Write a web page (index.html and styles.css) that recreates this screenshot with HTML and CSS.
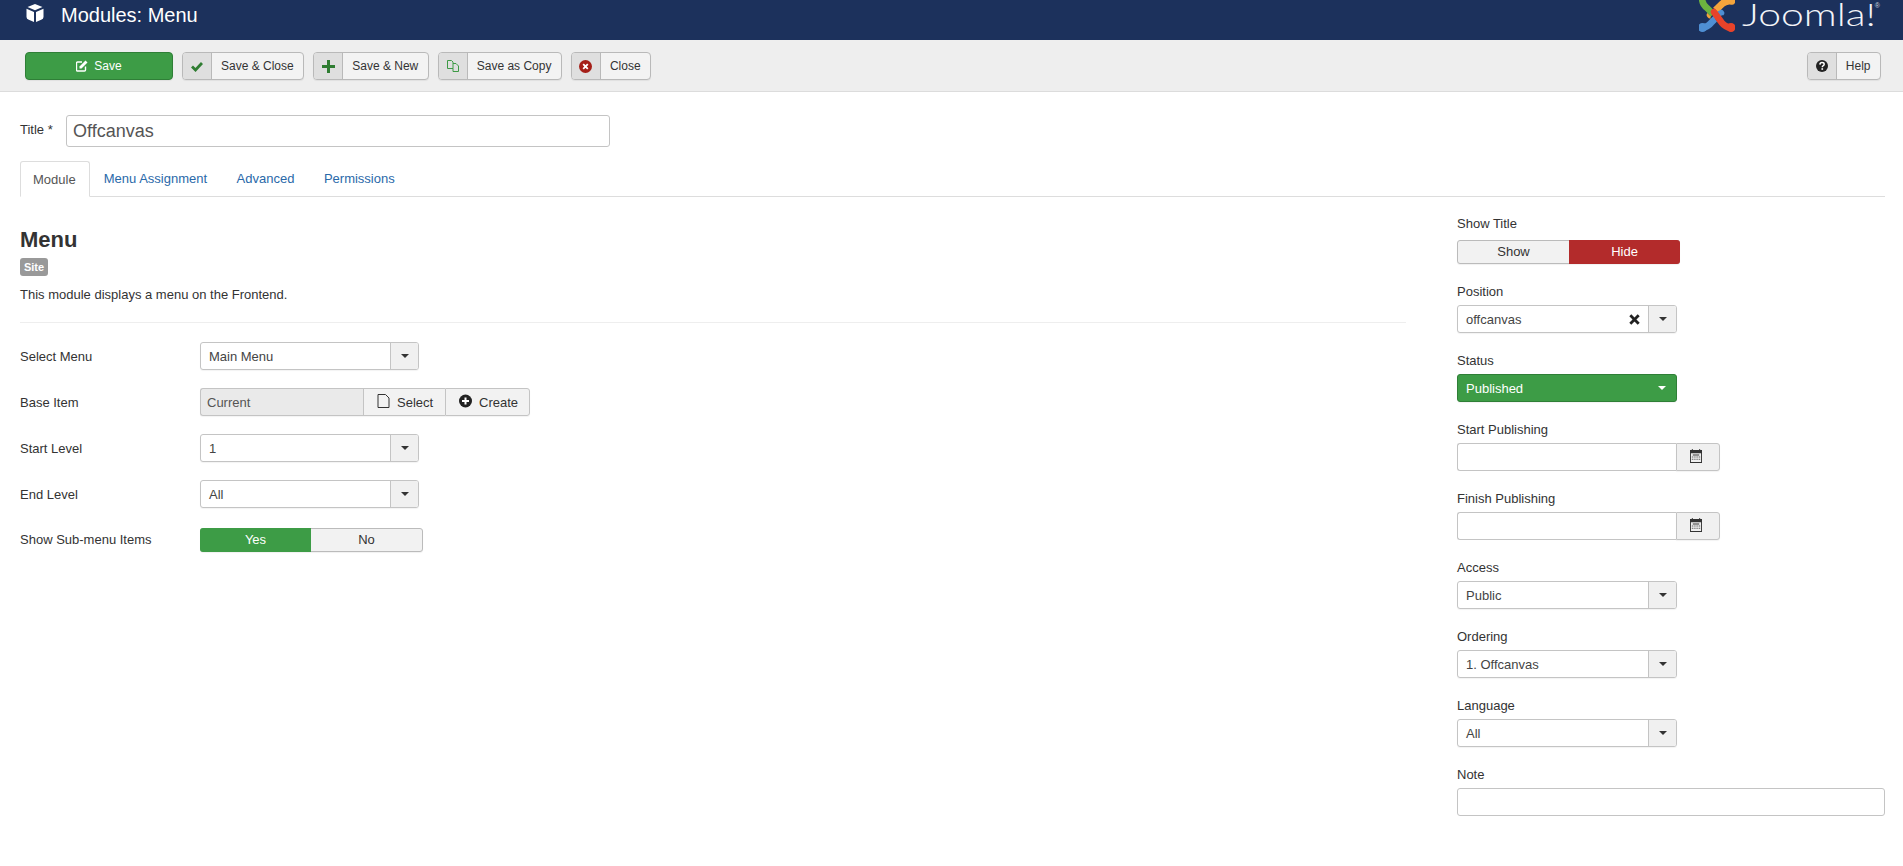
FILE: index.html
```html
<!DOCTYPE html>
<html lang="en">
<head>
<meta charset="utf-8">
<title>Modules: Menu</title>
<link rel="stylesheet" href="styles.css">
</head>
<body>
<header class="topbar">
  <svg class="cube" viewBox="0 0 18 18"><path d="M9 0 L16.5 3 L9 6.2 L1.500 3z"/><path d="M0.500 4.800 L8 8 V18 L2.800 15.800 Q0.500 15 0.500 13z"/><path d="M17.500 4.800 L10 8 V18 L15.200 15.800 Q17.500 15 17.500 13z"/></svg>
  <h1 class="page-title">Modules: Menu</h1>
  <div class="logo">
    <svg class="logo-mark" viewBox="0 0 36 33">
      <g fill="none" stroke-linecap="round" stroke-width="6.500">
        <path stroke="#f4a43c" d="M33 1.500 Q26 0 22 5 L11 15"/>
        <path stroke="#1c315c" stroke-width="8" stroke-linecap="butt" d="M9 8 L14 13"/>
        <path stroke="#6db33f" d="M3 -2 Q3 4 8 8 L19 19"/>
        <path stroke="#1c315c" stroke-width="8" stroke-linecap="butt" d="M14 20 L19 15"/>
        <path stroke="#4f8fd3" d="M3 28 Q9 27 12 23 L22 13"/>
        <path stroke="#1c315c" stroke-width="8" stroke-linecap="butt" d="M24 24 L20 17"/>
        <path stroke="#e8432a" d="M32 28 Q26 27 23 23 L15 12"/>
        <path stroke="#f4a43c" d="M27 2 Q24 2.500 22 5 L19.500 7.300"/>
      </g>
      <circle cx="3.500" cy="27.500" r="4.500" fill="#4f8fd3"/>
      <circle cx="32" cy="27.500" r="4.500" fill="#e8432a"/>
    </svg>
    <span class="logo-text">Joomla!</span><span class="logo-reg">®</span>
  </div>
</header>

<nav class="toolbar">
  <button class="btn btn-save"><svg class="ico-save" viewBox="0 0 12 12"><path d="M9.500 6.500 V10 a1 1 0 0 1 -1 1 H1.500 a1 1 0 0 1 -1 -1 V3 a1 1 0 0 1 1 -1 H6" fill="none" stroke="#fff" stroke-width="1.400"/><path d="M3.500 6.500 L9.500 0.500 L11.500 2.500 L5.500 8.500 H3.500z" fill="#fff"/></svg>Save</button>
  <button class="btn"><span class="btn-ico"><svg class="ico" viewBox="0 0 12 12"><path d="M1 6.500 L4.500 10 L11 3" fill="none" stroke="#2f7d32" stroke-width="2.800"/></svg></span><span class="btn-label">Save &amp; Close</span></button>
  <button class="btn"><span class="btn-ico"><svg class="ico ico-lg" viewBox="0 0 13 13"><path d="M5 0 H8 V5 H13 V8 H8 V13 H5 V8 H0 V5 H5z" fill="#2f7d32"/></svg></span><span class="btn-label">Save &amp; New</span></button>
  <button class="btn"><span class="btn-ico"><svg class="ico" viewBox="0 0 12 12"><path d="M0.500 0.500 H4.500 L6 2 V8.500 H0.500z M6 3.500 H9 L11.500 6 V11.500 H6 V8.500" fill="none" stroke="#3d9a45"/></svg></span><span class="btn-label">Save as Copy</span></button>
  <button class="btn"><span class="btn-ico"><svg class="ico ico-lg" viewBox="0 0 13 13"><circle cx="6.500" cy="6.500" r="6.500" fill="#a51f18"/><path d="M4.200 4.200 L8.800 8.800 M8.800 4.200 L4.200 8.800" stroke="#fff" stroke-width="1.800"/></svg></span><span class="btn-label">Close</span></button>
  <button class="btn btn-help"><span class="btn-ico"><svg class="ico" viewBox="0 0 12 12"><circle cx="6" cy="6" r="6" fill="#222"/><path d="M3.900 4.600 Q4 2.600 6 2.600 Q8.200 2.600 8.200 4.300 Q8.200 5.300 7 5.900 Q6.300 6.300 6.300 7.300" fill="none" stroke="#fff" stroke-width="1.500"/><rect x="5.400" y="8.200" width="1.700" height="1.600" fill="#fff"/></svg></span><span class="btn-label">Help</span></button>
</nav>

<main class="content">
  <div class="title-row">
    <label class="title-label">Title *</label>
    <input class="title-input" type="text" value="Offcanvas">
  </div>

  <ul class="tabs">
    <li class="tab tab-active">Module</li>
    <li class="tab">Menu Assignment</li>
    <li class="tab">Advanced</li>
    <li class="tab">Permissions</li>
  </ul>

  <div class="columns">
    <section class="main-col">
      <h2 class="mod-title">Menu</h2>
      <span class="badge">Site</span>
      <p class="mod-desc">This module displays a menu on the Frontend.</p>
      <hr class="divider">

      <div class="form-row">
        <label class="row-label">Select Menu</label>
        <div class="select select-main"><span class="select-text">Main Menu</span><span class="select-caret"><i class="caret"></i></span></div>
      </div>
      <div class="form-row">
        <label class="row-label">Base Item</label>
        <div class="pick">
          <span class="pick-value">Current</span>
          <span class="pick-btn pick-select"><svg class="ico ico-file" viewBox="0 0 12 14"><path d="M0.500 0.500 H8 L11.500 4 V13.500 H0.500z" fill="none" stroke="#333"/></svg><span class="pick-text">Select</span></span>
          <span class="pick-btn pick-create"><svg class="ico ico-file" viewBox="0 0 13 13"><circle cx="6.500" cy="6.500" r="6.500" fill="#222"/><path d="M5.500 3 H7.500 V5.500 H10 V7.500 H7.500 V10 H5.500 V7.500 H3 V5.500 H5.500z" fill="#fff"/></svg><span class="pick-text">Create</span></span>
        </div>
      </div>
      <div class="form-row">
        <label class="row-label">Start Level</label>
        <div class="select select-main"><span class="select-text">1</span><span class="select-caret"><i class="caret"></i></span></div>
      </div>
      <div class="form-row">
        <label class="row-label">End Level</label>
        <div class="select select-main"><span class="select-text">All</span><span class="select-caret"><i class="caret"></i></span></div>
      </div>
      <div class="form-row">
        <label class="row-label row-label-switch">Show Sub-menu Items</label>
        <div class="switch switch-main"><span class="switch-opt is-yes">Yes</span><span class="switch-opt">No</span></div>
      </div>
    </section>

    <aside class="side-col">
      <div class="field">
        <label class="field-label">Show Title</label>
        <div class="switch switch-side"><span class="switch-opt">Show</span><span class="switch-opt is-no">Hide</span></div>
      </div>
      <div class="field">
        <label class="field-label">Position</label>
        <div class="select select-side"><span class="select-text">offcanvas</span><svg class="ico-clear" viewBox="0 0 11 11"><path d="M1.300 1.300 L9.700 9.700 M9.700 1.300 L1.300 9.700" stroke="#222" stroke-width="2.800"/></svg><span class="select-caret"><i class="caret"></i></span></div>
      </div>
      <div class="field">
        <label class="field-label">Status</label>
        <div class="select select-side select-green"><span class="select-text">Published</span><span class="select-caret"><i class="caret"></i></span></div>
      </div>
      <div class="field">
        <label class="field-label">Start Publishing</label>
        <div class="date"><input class="date-input" type="text"><span class="date-btn"><svg class="ico ico-cal" viewBox="0 0 13 13" preserveAspectRatio="none"><path fill-rule="evenodd" d="M0 1 H2 V0 H3 V1 H10 V0 H11 V1 H13 V13 H0z M1 4 V12 H12 V4z" fill="#333"/><path d="M3 5.500 H11 M2 7.500 H11 M2 9.500 H11 M4.500 5 V11 M6.500 5 V11 M8.500 5 V11" stroke="#333" stroke-width="1" stroke-dasharray="1 1"/></svg></span></div>
      </div>
      <div class="field">
        <label class="field-label">Finish Publishing</label>
        <div class="date"><input class="date-input" type="text"><span class="date-btn"><svg class="ico ico-cal" viewBox="0 0 13 13" preserveAspectRatio="none"><path fill-rule="evenodd" d="M0 1 H2 V0 H3 V1 H10 V0 H11 V1 H13 V13 H0z M1 4 V12 H12 V4z" fill="#333"/><path d="M3 5.500 H11 M2 7.500 H11 M2 9.500 H11 M4.500 5 V11 M6.500 5 V11 M8.500 5 V11" stroke="#333" stroke-width="1" stroke-dasharray="1 1"/></svg></span></div>
      </div>
      <div class="field">
        <label class="field-label">Access</label>
        <div class="select select-side"><span class="select-text">Public</span><span class="select-caret"><i class="caret"></i></span></div>
      </div>
      <div class="field">
        <label class="field-label">Ordering</label>
        <div class="select select-side"><span class="select-text">1. Offcanvas</span><span class="select-caret"><i class="caret"></i></span></div>
      </div>
      <div class="field">
        <label class="field-label">Language</label>
        <div class="select select-side"><span class="select-text">All</span><span class="select-caret"><i class="caret"></i></span></div>
      </div>
      <div class="field">
        <label class="field-label">Note</label>
        <input class="note-input" type="text">
      </div>
    </aside>
  </div>
</main>
</body>
</html>
```
FILE: styles.css
```css
* { box-sizing: border-box; }
html, body { margin: 0; padding: 0; height: 100%; overflow: hidden; }
body { font-family: "Liberation Sans", Arial, sans-serif; font-size: 13px; line-height: 18px; color: #333; background: #fff; }

/* top bar */
.topbar { display: flex; align-items: flex-start; height: 40px; background: #1c315c; color: #fff; padding-left: 26px; overflow: hidden; }
.cube { width: 18px; height: 18px; margin-top: 4px; fill: #fff; flex: none; }
.page-title { margin: 3px 0 0 17px; font-size: 20px; font-weight: 400; line-height: 24px; }
.logo { display: flex; align-items: flex-start; margin-left: auto; margin-right: 23px; height: 40px; }
.logo-mark { width: 36px; height: 33px; flex: none; }
.logo-text { width: 131px; margin-left: 7px; font-family: Lato, "Liberation Sans", sans-serif; font-weight: 300; font-size: 31px; line-height: 28px; white-space: nowrap; color: #f4f5f8; transform: scaleX(1.32); transform-origin: left top; }
.logo-reg { margin: 2px 0 0 2px; font-size: 7px; line-height: 8px; color: #cfd3dc; }

/* toolbar */
.toolbar { display: flex; gap: 9px; height: 52px; padding: 12px 22px 0 25px; background: #eee; border-bottom: 1px solid #dcdcdc; }
.btn { display: flex; align-items: stretch; height: 28px; padding: 0; font: inherit; font-size: 12px; line-height: 26px; color: #333; background: #f3f3f3; border: 1px solid #b9b9b9; border-radius: 4px; box-shadow: 0 1px 1px rgba(0,0,0,.06); }
.btn-ico { display: flex; align-items: center; justify-content: center; width: 29px; background: #dfdfdf; border-right: 1px solid #b9b9b9; border-radius: 3px 0 0 3px; }
.btn-label { padding: 0 9.500px 0 9px; }
.btn-save { width: 148px; justify-content: center; align-items: center; color: #fff; background: #3d9c46; border-color: #2f7f37; }
.btn-help { margin-left: auto; }
.ico { width: 12px; height: 12px; display: block; }
.ico-lg { width: 13px; height: 13px; }
.ico-save { width: 12px; height: 12px; margin-right: 6px; }

/* content */
.content { padding: 23px 18px 0 20px; }
.title-row { display: flex; align-items: flex-start; height: 32px; margin-bottom: 14px; }
.title-label { width: 46px; margin-top: 6px; }
.title-input { width: 544px; height: 32px; padding: 0 6px; font: inherit; font-size: 18px; color: #555; border: 1px solid #c4c4c4; border-radius: 3px; }

.tabs { display: flex; list-style: none; margin: 0; padding: 0; height: 36px; border-bottom: 1px solid #ddd; }
.tab { height: 36px; padding: 9px 14.750px 0; color: #2a69a9; }
.tab-active { width: 70px; margin-right: -1px; padding-left: 12px; color: #555; background: #fff; border: 1px solid #ddd; border-bottom-color: #fff; border-radius: 3px 3px 0 0; }

.columns { display: grid; grid-template-columns: 1386px 428px; column-gap: 51px; padding-top: 17px; }

.mod-title { margin: 14px 0 6px; font-size: 22px; line-height: 24px; font-weight: 700; color: #333; }
.badge { display: block; width: 28px; height: 18px; background: #999; color: #fff; font-size: 11px; font-weight: 700; line-height: 18px; text-align: center; border-radius: 3px; }
.mod-desc { margin: 10px 0 18px; }
.divider { height: 1px; margin: 0 0 19px; border: 0; background: #eee; }

.form-row { display: flex; align-items: center; margin-bottom: 18px; }
.row-label { width: 180px; flex: none; padding-top: 2px; }
.row-label-switch { padding-top: 1px; }

.select { display: flex; align-items: center; height: 28px; background: #fff; color: #444; border: 1px solid #c4c4c4; border-radius: 3px; box-shadow: 0 1px 1px rgba(0,0,0,.05); }
.select-main { width: 219px; }
.select-side { width: 220px; }
.select-text { flex: 1; padding: 2px 0 0 8px; }
.select-caret { display: flex; align-items: center; justify-content: center; width: 28px; height: 100%; background: #f0f0f0; border-left: 1px solid #c4c4c4; border-radius: 0 2px 2px 0; }
.caret { display: block; width: 0; height: 0; margin-top: -1px; border-style: solid; border-width: 4px 4px 0; border-color: #333 transparent transparent; }
.ico-clear { width: 11px; height: 11px; margin-right: 8px; }
.select-green { background: #3d9c46; color: #fff; border-color: #2f7f37; }
.select-green .select-caret { background: transparent; border-left: 0; }
.select-green .caret { border-top-color: #fff; }

.pick { display: flex; height: 28px; width: 330px; color: #333; border-radius: 3px; box-shadow: 0 1px 1px rgba(0,0,0,.05); }
.pick-value { width: 163px; padding: 5px 6px 3px; color: #555; background: #eaeaea; border: 1px solid #c4c4c4; border-right: 0; border-radius: 3px 0 0 3px; }
.pick-btn { display: flex; align-items: center; background: #f2f2f2; border: 1px solid #c4c4c4; padding-left: 13px; }
.pick-text { padding-top: 2px; }
.pick-select { width: 82px; border-right: 0; }
.pick-create { width: 85px; padding-left: 13px; border-radius: 0 3px 3px 0; }
.ico-file { width: 13px; height: 14px; margin: -2px 7px 0 0; }

.switch { display: flex; height: 24px; color: #333; background: #f2f2f2; border: 1px solid #bbb; border-radius: 3px; box-shadow: 0 1px 1px rgba(0,0,0,.06); }
.switch-main { width: 223px; margin-top: 2px; }
.switch-side { width: 223px; margin-top: 8px; }
.switch-opt { flex: 1; text-align: center; line-height: 22px; }
.is-yes { margin: -1px 0 -1px -1px; line-height: 24px; background: #3d9c46; color: #fff; border-radius: 3px 0 0 3px; }
.is-no { margin: -1px -1px -1px 0; line-height: 24px; background: #b32b2b; color: #fff; border-radius: 0 3px 3px 0; }

/* sidebar */
.field { margin-bottom: 18px; }
.field-label { display: block; height: 18px; margin-bottom: 5px; padding-top: 1px; }
.date { display: flex; height: 28px; width: 263px; }
.date-input { width: 219px; height: 28px; padding: 0; border: 1px solid #c4c4c4; border-right: 0; border-radius: 3px 0 0 3px; }
.date-btn { display: flex; align-items: center; justify-content: center; width: 44px; padding-right: 5px; background: #f0f0f0; border: 1px solid #c4c4c4; border-radius: 0 3px 3px 0; box-shadow: 0 1px 1px rgba(0,0,0,.05); }
.ico-cal { width: 12px; height: 14px; margin-top: -2px; }
.note-input { display: block; width: 428px; height: 28px; padding: 0; border: 1px solid #c4c4c4; border-radius: 3px; }
```
